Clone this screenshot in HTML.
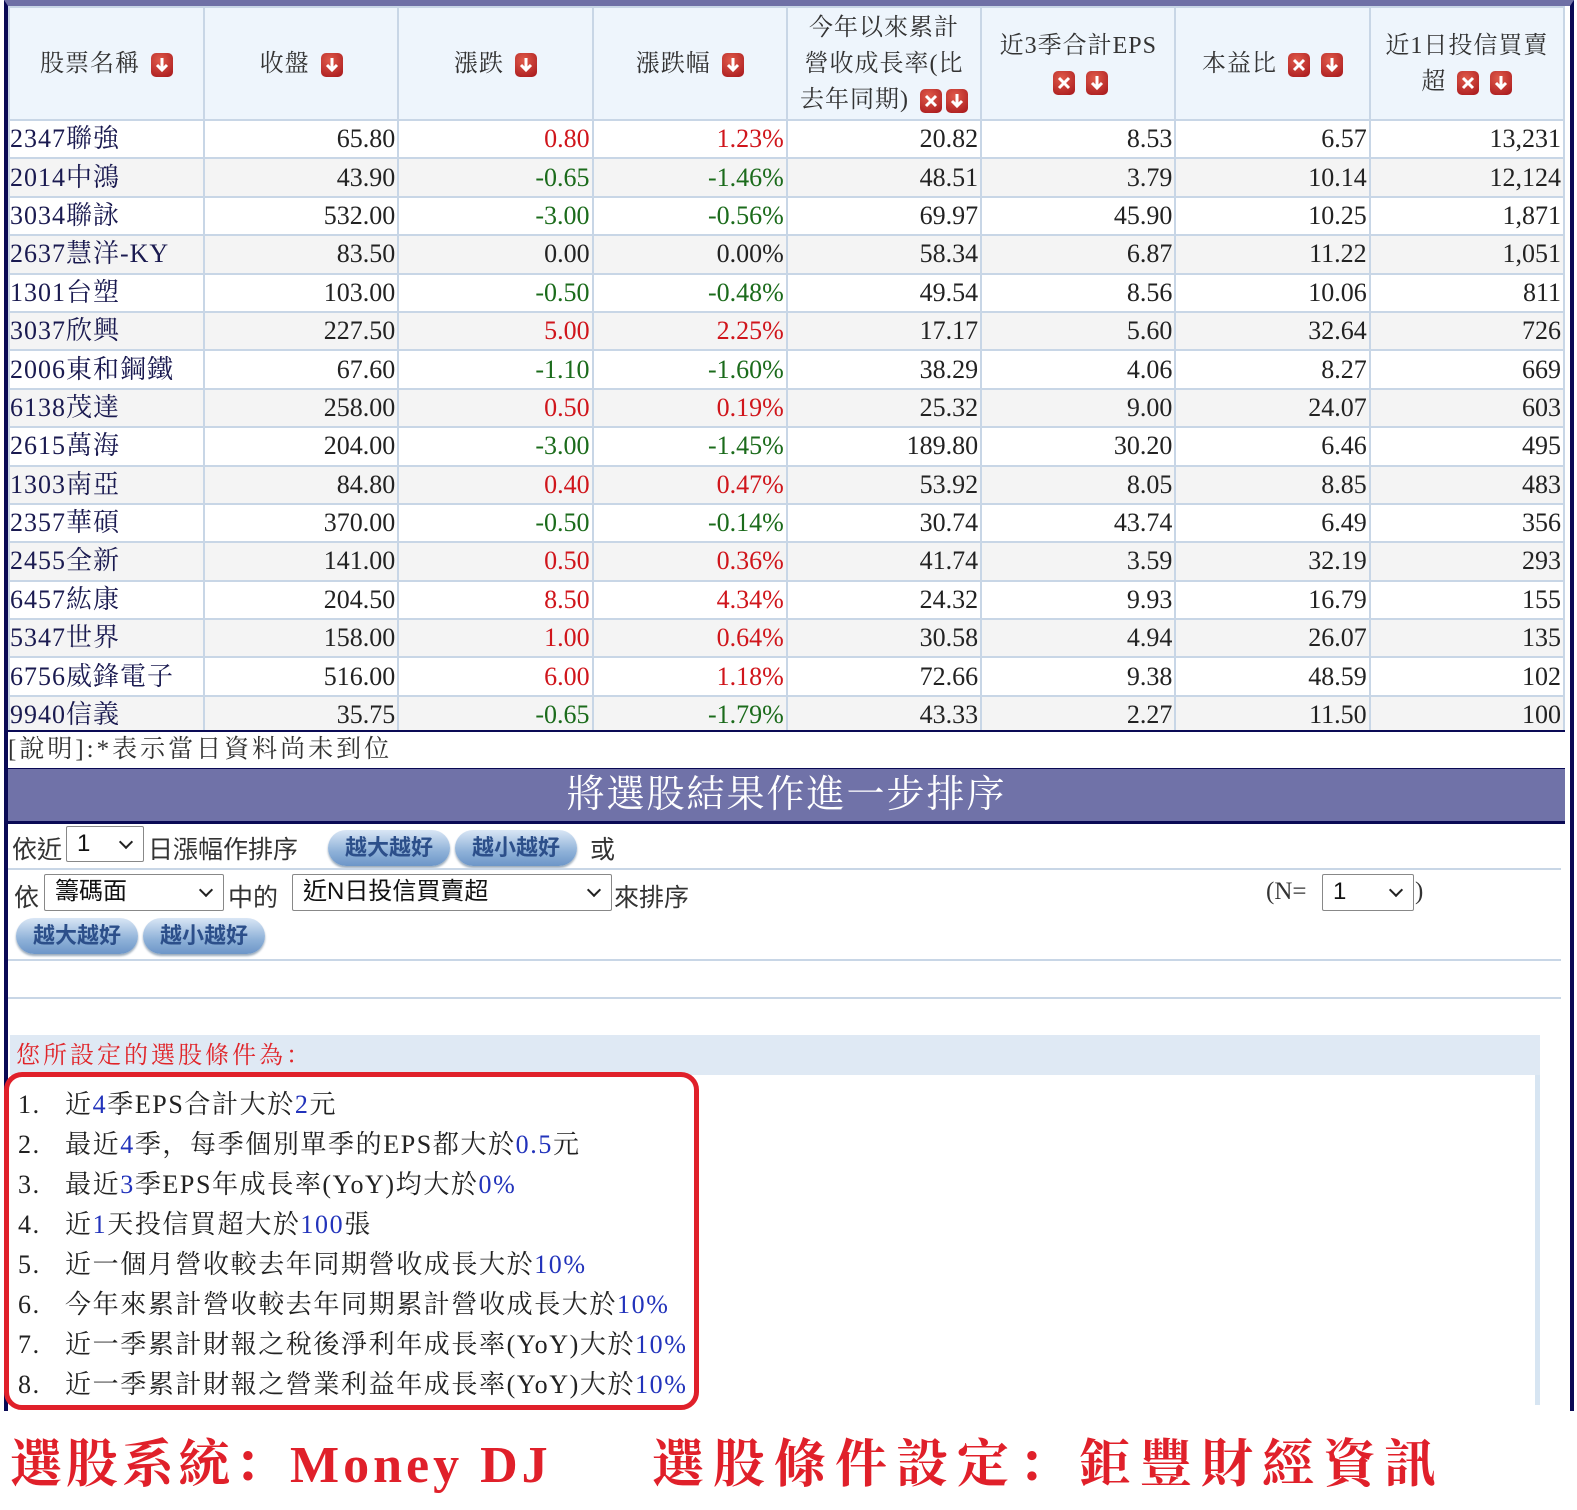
<!DOCTYPE html>
<html><head><meta charset="utf-8">
<style>
body{margin:0;width:1577px;height:1510px;background:#fff;position:relative;overflow:hidden;font-family:"Liberation Serif","Noto Serif CJK SC",serif;}
.frame{position:absolute;left:4px;top:0;width:1562px;height:1405px;border-left:4px solid #0a0a55;border-right:4px solid #0a0a55;border-top:6px solid #6f70a6;}
table{border-collapse:collapse;position:absolute;left:8px;top:6px;width:1557px;table-layout:fixed;}
td,th{border:2px solid #c8d6e6;padding:0 2px;}
th{background:#eef5fc;height:111px;font-weight:normal;font-size:24px;color:#333;line-height:36px;letter-spacing:1px;}
td{height:36.4px;font-size:26px;text-align:right;color:#222;line-height:36px;white-space:nowrap;}
td.n{text-align:left;color:#1a1a50;padding-left:0;letter-spacing:1px;}
tr:nth-child(odd) td{background:#f4f4f4;}
.r{color:#d0151b}.g{color:#1b6b1b}
.ic{display:inline-block;width:22px;height:24px;border-radius:5px;background:radial-gradient(circle at 40% 30%,#e05a4a,#a5151a);vertical-align:middle;position:relative;margin-left:4px;}
.ic svg{position:absolute;left:0;top:0}
.note{position:absolute;left:8px;top:730px;width:1557px;height:36px;font-size:25px;color:#333;line-height:36px;border-bottom:3px solid #0a0a55;border-top:2px solid #0a0a55;letter-spacing:3px;background:#fff;}
.band{position:absolute;left:8px;top:769px;width:1557px;height:52px;background:#7072a8;color:#fff;font-size:38px;text-align:center;line-height:52px;border-bottom:3px solid #0a0a55;letter-spacing:2px;}
.line{position:absolute;left:8px;width:1553px;border-top:2px solid #c8d6e6;}
.t{position:absolute;font-size:25px;color:#333;font-family:"Liberation Sans","Noto Sans CJK TC",sans-serif;}
.sel{position:absolute;border:1px solid #888;border-radius:2px;background:#fff;font-family:"Liberation Sans","Noto Sans CJK TC",sans-serif;font-size:24px;color:#111;box-sizing:border-box;padding-left:10px;line-height:34px;}
.sel:after{content:"";position:absolute;right:12px;top:10px;width:8px;height:8px;border-right:2px solid #222;border-bottom:2px solid #222;transform:rotate(45deg);}
.btn{position:absolute;height:36px;border-radius:18px;background:linear-gradient(#d9e6f5,#8eb1d8 60%,#6d96c8);color:#2c4f8a;font-size:22px;font-weight:bold;text-align:center;line-height:36px;font-family:"Liberation Sans","Noto Sans CJK TC",sans-serif;box-shadow:0 2px 2px #9ab;}
.cond{position:absolute;left:10px;top:1035px;width:1530px;height:40px;background:#dfe9f4;color:#e0252a;font-size:24px;line-height:42px;padding-left:6px;box-sizing:border-box;letter-spacing:3px;}
.condbody{position:absolute;left:10px;top:1075px;width:1530px;height:330px;border-right:5px solid #d7e5f2;box-sizing:border-box;}
.box{position:absolute;left:4px;top:1072px;width:685px;height:328px;border:5px solid #e0202a;border-radius:18px;}
.li{position:absolute;left:18px;font-size:26px;color:#222;letter-spacing:1.6px;white-space:nowrap;}
.li b{font-weight:normal;color:#2233bb}
.big{position:absolute;top:1422px;font-size:52px;font-weight:bold;color:#e0202a;font-family:"Liberation Serif","Noto Serif CJK SC",serif;white-space:nowrap;}
</style></head><body>
<div class="frame"></div>
<table>
<colgroup><col style="width:195px"><col><col><col><col><col><col><col></colgroup>
<tr><th>股票名稱 <span class="ic"><svg width="22" height="24"><path d="M11 5v12M6 12l5 5 5-5" stroke="#fff" stroke-width="3" fill="none"/></svg></span></th>
<th>收盤 <span class="ic"><svg width="22" height="24"><path d="M11 5v12M6 12l5 5 5-5" stroke="#fff" stroke-width="3" fill="none"/></svg></span></th>
<th>漲跌 <span class="ic"><svg width="22" height="24"><path d="M11 5v12M6 12l5 5 5-5" stroke="#fff" stroke-width="3" fill="none"/></svg></span></th>
<th>漲跌幅 <span class="ic"><svg width="22" height="24"><path d="M11 5v12M6 12l5 5 5-5" stroke="#fff" stroke-width="3" fill="none"/></svg></span></th>
<th>今年以來累計<br>營收成長率(比<br>去年同期) <span class="ic"><svg width="22" height="24"><path d="M6 7l10 10M16 7L6 17" stroke="#fff" stroke-width="3"/></svg></span><span class="ic"><svg width="22" height="24"><path d="M11 5v12M6 12l5 5 5-5" stroke="#fff" stroke-width="3" fill="none"/></svg></span></th>
<th>近3季合計EPS<br><span class="ic"><svg width="22" height="24"><path d="M6 7l10 10M16 7L6 17" stroke="#fff" stroke-width="3"/></svg></span> <span class="ic"><svg width="22" height="24"><path d="M11 5v12M6 12l5 5 5-5" stroke="#fff" stroke-width="3" fill="none"/></svg></span></th>
<th>本益比 <span class="ic"><svg width="22" height="24"><path d="M6 7l10 10M16 7L6 17" stroke="#fff" stroke-width="3"/></svg></span> <span class="ic"><svg width="22" height="24"><path d="M11 5v12M6 12l5 5 5-5" stroke="#fff" stroke-width="3" fill="none"/></svg></span></th>
<th>近1日投信買賣<br>超 <span class="ic"><svg width="22" height="24"><path d="M6 7l10 10M16 7L6 17" stroke="#fff" stroke-width="3"/></svg></span> <span class="ic"><svg width="22" height="24"><path d="M11 5v12M6 12l5 5 5-5" stroke="#fff" stroke-width="3" fill="none"/></svg></span></th></tr>
<tr><td class="n">2347聯強</td><td>65.80</td><td class="r">0.80</td><td class="r">1.23%</td><td>20.82</td><td>8.53</td><td>6.57</td><td>13,231</td></tr>
<tr><td class="n">2014中鴻</td><td>43.90</td><td class="g">-0.65</td><td class="g">-1.46%</td><td>48.51</td><td>3.79</td><td>10.14</td><td>12,124</td></tr>
<tr><td class="n">3034聯詠</td><td>532.00</td><td class="g">-3.00</td><td class="g">-0.56%</td><td>69.97</td><td>45.90</td><td>10.25</td><td>1,871</td></tr>
<tr><td class="n">2637慧洋-KY</td><td>83.50</td><td>0.00</td><td>0.00%</td><td>58.34</td><td>6.87</td><td>11.22</td><td>1,051</td></tr>
<tr><td class="n">1301台塑</td><td>103.00</td><td class="g">-0.50</td><td class="g">-0.48%</td><td>49.54</td><td>8.56</td><td>10.06</td><td>811</td></tr>
<tr><td class="n">3037欣興</td><td>227.50</td><td class="r">5.00</td><td class="r">2.25%</td><td>17.17</td><td>5.60</td><td>32.64</td><td>726</td></tr>
<tr><td class="n">2006東和鋼鐵</td><td>67.60</td><td class="g">-1.10</td><td class="g">-1.60%</td><td>38.29</td><td>4.06</td><td>8.27</td><td>669</td></tr>
<tr><td class="n">6138茂達</td><td>258.00</td><td class="r">0.50</td><td class="r">0.19%</td><td>25.32</td><td>9.00</td><td>24.07</td><td>603</td></tr>
<tr><td class="n">2615萬海</td><td>204.00</td><td class="g">-3.00</td><td class="g">-1.45%</td><td>189.80</td><td>30.20</td><td>6.46</td><td>495</td></tr>
<tr><td class="n">1303南亞</td><td>84.80</td><td class="r">0.40</td><td class="r">0.47%</td><td>53.92</td><td>8.05</td><td>8.85</td><td>483</td></tr>
<tr><td class="n">2357華碩</td><td>370.00</td><td class="g">-0.50</td><td class="g">-0.14%</td><td>30.74</td><td>43.74</td><td>6.49</td><td>356</td></tr>
<tr><td class="n">2455全新</td><td>141.00</td><td class="r">0.50</td><td class="r">0.36%</td><td>41.74</td><td>3.59</td><td>32.19</td><td>293</td></tr>
<tr><td class="n">6457紘康</td><td>204.50</td><td class="r">8.50</td><td class="r">4.34%</td><td>24.32</td><td>9.93</td><td>16.79</td><td>155</td></tr>
<tr><td class="n">5347世界</td><td>158.00</td><td class="r">1.00</td><td class="r">0.64%</td><td>30.58</td><td>4.94</td><td>26.07</td><td>135</td></tr>
<tr><td class="n">6756威鋒電子</td><td>516.00</td><td class="r">6.00</td><td class="r">1.18%</td><td>72.66</td><td>9.38</td><td>48.59</td><td>102</td></tr>
<tr><td class="n">9940信義</td><td>35.75</td><td class="g">-0.65</td><td class="g">-1.79%</td><td>43.33</td><td>2.27</td><td>11.50</td><td>100</td></tr>
</table>
<div class="note">[說明]:*表示當日資料尚未到位</div>
<div class="band">將選股結果作進一步排序</div>
<div class="t" style="left:12px;top:830px">依近</div>
<div class="sel" style="left:66px;top:826px;width:78px;height:36px">1</div>
<div class="t" style="left:148px;top:830px">日漲幅作排序</div>
<div class="btn" style="left:328px;top:830px;width:122px">越大越好</div>
<div class="btn" style="left:455px;top:830px;width:122px">越小越好</div>
<div class="t" style="left:590px;top:830px">或</div>
<div class="line" style="top:868px"></div>
<div class="t" style="left:14px;top:878px">依</div>
<div class="sel" style="left:44px;top:874px;width:180px;height:37px">籌碼面</div>
<div class="t" style="left:228px;top:878px">中的</div>
<div class="sel" style="left:292px;top:874px;width:320px;height:37px">近N日投信買賣超</div>
<div class="t" style="left:614px;top:878px">來排序</div>
<div class="t" style="left:1266px;top:878px;font-family:'Liberation Serif',serif">(N=</div>
<div class="sel" style="left:1322px;top:874px;width:92px;height:37px">1</div>
<div class="t" style="left:1415px;top:878px;font-family:'Liberation Serif',serif">)</div>
<div class="btn" style="left:16px;top:918px;width:122px">越大越好</div>
<div class="btn" style="left:143px;top:918px;width:122px">越小越好</div>
<div class="line" style="top:959px"></div>
<div class="line" style="top:997px"></div>
<div class="cond">您所設定的選股條件為：</div>
<div class="condbody"></div>
<div class="box"></div>
<div class="li" style="top:1084px">1.&nbsp;&nbsp; 近<b>4</b>季EPS合計大於<b>2</b>元</div>
<div class="li" style="top:1124px">2.&nbsp;&nbsp; 最近<b>4</b>季，每季個別單季的EPS都大於<b>0.5</b>元</div>
<div class="li" style="top:1164px">3.&nbsp;&nbsp; 最近<b>3</b>季EPS年成長率(YoY)均大於<b>0%</b></div>
<div class="li" style="top:1204px">4.&nbsp;&nbsp; 近<b>1</b>天投信買超大於<b>100</b>張</div>
<div class="li" style="top:1244px">5.&nbsp;&nbsp; 近一個月營收較去年同期營收成長大於<b>10%</b></div>
<div class="li" style="top:1284px">6.&nbsp;&nbsp; 今年來累計營收較去年同期累計營收成長大於<b>10%</b></div>
<div class="li" style="top:1324px">7.&nbsp;&nbsp; 近一季累計財報之稅後淨利年成長率(YoY)大於<b>10%</b></div>
<div class="li" style="top:1364px">8.&nbsp;&nbsp; 近一季累計財報之營業利益年成長率(YoY)大於<b>10%</b></div>
<div class="big" style="left:10px;letter-spacing:4px">選股系統：Money DJ</div>
<div class="big" style="left:652px;letter-spacing:9px">選股條件設定：鉅豐財經資訊</div>
</body></html>
